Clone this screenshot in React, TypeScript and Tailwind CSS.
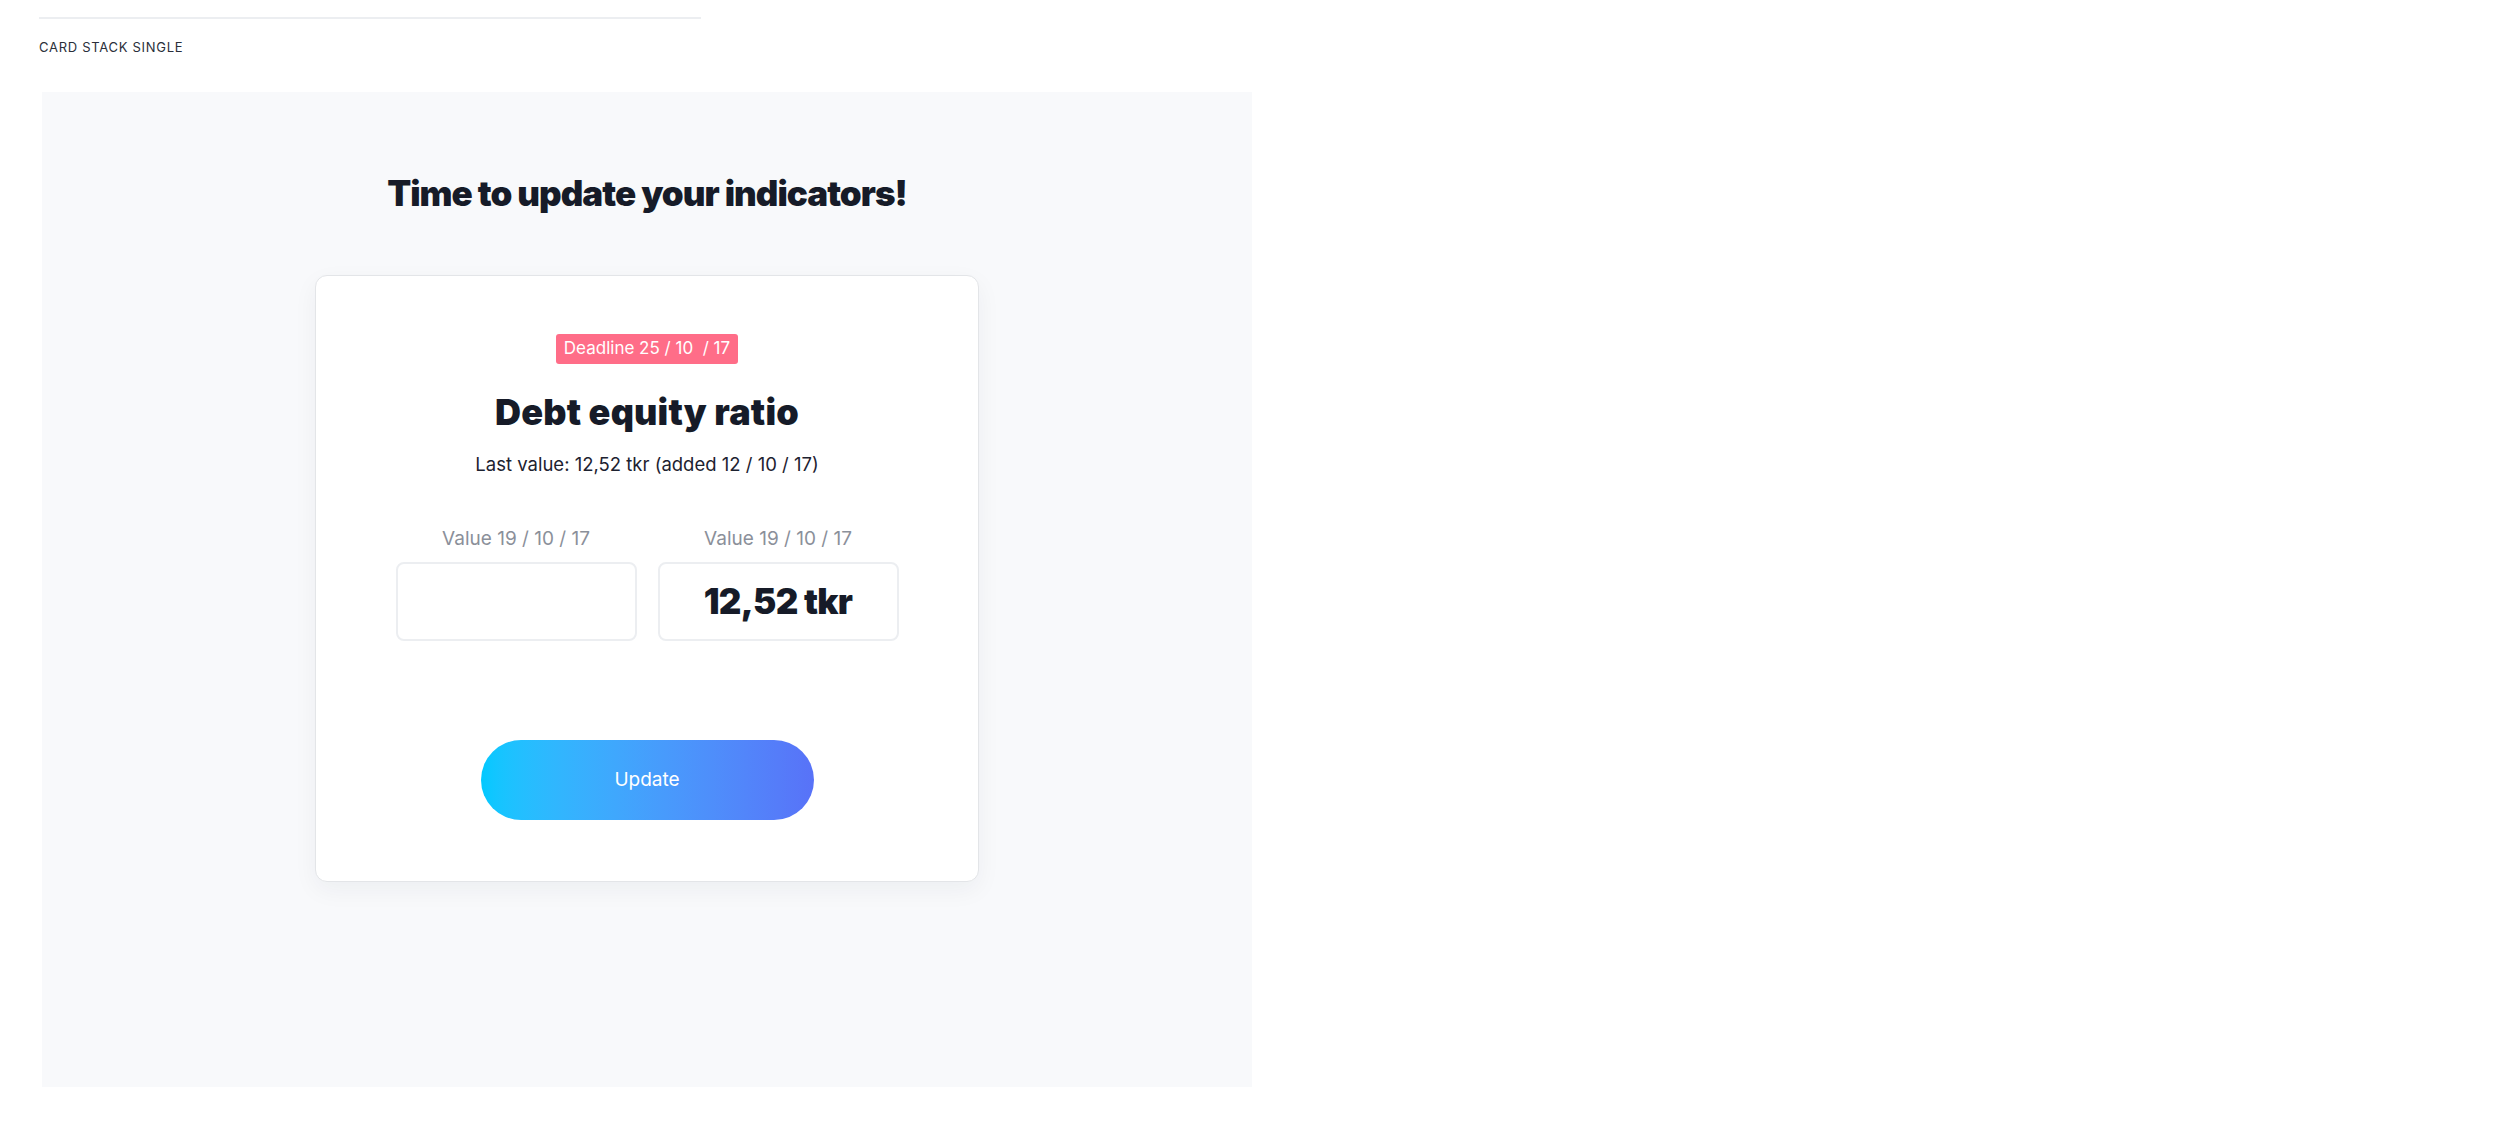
export default function App() {
  return (
    <div className="min-h-screen bg-white pl-[39px] pt-[17px] font-['Inter',sans-serif]">
      <div className="h-[2px] w-[662px] bg-[#eceef1]" />
      <p className="mt-[20px] text-[13px] leading-[16px] tracking-[0.055em] text-[#2a2f3a]">
        CARD STACK SINGLE
      </p>
      <div className="mt-[37px] ml-[3px] flex h-[995px] w-[1210px] flex-col items-center bg-[#f8f9fb] pt-[83px]">
        <h1 className="text-[35px] leading-[36px] font-black tracking-[-0.028em] text-[#161b28]">
          Time to update your indicators!
        </h1>

        <div className="mt-[64px] flex w-[664px] flex-col items-center rounded-[12px] border border-[#e3e5e8] bg-white pt-[58px] pb-[61px] shadow-[0_8px_24px_rgba(20,30,60,0.05)]">
          <span className="flex h-[30px] items-center rounded-[3px] bg-[#ff6d88] px-[8px] text-[17px] text-white">
            Deadline 25 / 10&nbsp; / 17
          </span>

          <h2 className="mt-[31px] text-[36px] leading-[35px] font-black tracking-[0.005em] text-[#161b28]">
            Debt equity ratio
          </h2>

          <p className="mt-[22px] text-[18.5px] leading-[24px] text-[#1d2230]">
            Last value: 12,52 tkr (added 12 / 10 / 17)
          </p>

          <div className="mt-[51px] flex gap-[21px]">
            <div className="flex w-[241px] flex-col items-center">
              <span className="text-[19px] leading-[24px] text-[#8b909a]">Value 19 / 10 / 17</span>
              <div className="mt-[11px] h-[79px] w-full rounded-[8px] border-2 border-[#eceef1] bg-white" />
            </div>
            <div className="flex w-[241px] flex-col items-center">
              <span className="text-[19px] leading-[24px] text-[#8b909a]">Value 19 / 10 / 17</span>
              <div className="mt-[11px] flex h-[79px] w-full items-center justify-center rounded-[8px] border-2 border-[#eceef1] bg-white">
                <span className="text-[35px] font-black tracking-[-0.02em] text-[#161b28]">12,52 tkr</span>
              </div>
            </div>
          </div>

          <button className="mt-[99px] flex h-[80px] w-[333px] items-center justify-center rounded-full bg-gradient-to-r from-[#00c9ff] to-[#5872f8] text-[19px] text-white">
            Update
          </button>
        </div>
      </div>
    </div>
  );
}
